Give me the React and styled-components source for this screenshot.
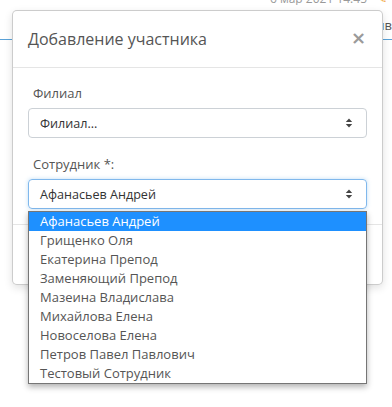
import React from "react";
import styled, { createGlobalStyle } from "styled-components";

const GlobalStyle = createGlobalStyle`
  html, body {
    margin: 0;
    padding: 0;
    background: #fff;
    font-family: "Open Sans", "Noto Sans", sans-serif;
    color: #555;
  }
  * { box-sizing: border-box; }
`;

const employees = [
  "Афанасьев Андрей",
  "Грищенко Оля",
  "Екатерина Препод",
  "Заменяющий Препод",
  "Мазеина Владислава",
  "Михайлова Елена",
  "Новоселова Елена",
  "Петров Павел Павлович",
  "Тестовый Сотрудник",
];

const Page = styled.div`
  position: relative;
  width: 392px;
  height: 407px;
  overflow: hidden;
`;

const TopStrip = styled.div`
  height: 5px;
  overflow: hidden;
  display: flex;
  justify-content: flex-end;
  align-items: flex-end;
  gap: 10px;
  padding-right: 5px;
  font-size: 12px;
  line-height: 12px;
  color: #999;
`;

const Accent = styled.span`
  color: #f0a030;
`;

const NavRow = styled.div`
  height: 35px;
  border-bottom: 1px solid #5aa2d8;
  display: flex;
  justify-content: flex-end;
  align-items: center;
  padding-top: 6px;
  font-size: 13px;
  color: #555;
`;

const Modal = styled.div`
  position: absolute;
  left: 12px;
  top: 10px;
  width: 371px;
  background: #fff;
  border: 1px solid rgba(0, 0, 0, 0.2);
  border-radius: 5px;
  box-shadow: 0 3px 9px rgba(0, 0, 0, 0.12);
`;

const Header = styled.div`
  display: flex;
  align-items: center;
  justify-content: space-between;
  padding: 15px;
  border-bottom: 1px solid #e5e5e5;
`;

const Title = styled.h4`
  margin: 0;
  font-size: 16px;
  line-height: 26px;
  font-weight: 400;
  color: #555;
`;

const Close = styled.span`
  font-family: "DejaVu Sans", sans-serif;
  font-size: 18px;
  font-weight: 700;
  line-height: 1;
  color: #9a9a9a;
  margin-top: -2px;
  margin-right: 1px;
`;

const Body = styled.div`
  padding: 15px;
  display: flex;
  flex-direction: column;
  gap: 16px;
`;

const Group = styled.div`
  position: relative;
  display: flex;
  flex-direction: column;
  gap: 5px;
`;

const Label = styled.label`
  padding-left: 5px;
  font-size: 13px;
  line-height: 20px;
  color: #555;
`;

const Select = styled.div`
  height: 30px;
  display: flex;
  align-items: center;
  justify-content: space-between;
  padding: 0 13px 0 11px;
  font-size: 12.6px;
  color: #333;
  border: 1px solid ${(p) => (p.$focused ? "#80b8ec" : "#ccd1d6")};
  border-radius: 4px;
  box-shadow: ${(p) =>
    p.$focused ? "0 0 4px rgba(102, 175, 233, 0.4)" : "none"};
`;

const Arrows = () => (
  <svg width="8" height="10" viewBox="0 0 8 10">
    <path d="M4 0.5 L7.2 4 H0.8 Z" fill="#444" />
    <path d="M4 9.5 L7.2 6 H0.8 Z" fill="#444" />
  </svg>
);

const Dropdown = styled.ul`
  position: absolute;
  top: calc(100% + 2px);
  left: 0;
  right: 0;
  margin: 0;
  padding: 0;
  list-style: none;
  background: #fff;
  border: 1px solid #767676;
  box-shadow: 0 3px 6px rgba(0, 0, 0, 0.3);
  z-index: 2;
`;

const Option = styled.li`
  height: 19px;
  line-height: 19px;
  padding-left: 11px;
  font-size: 13px;
  color: ${(p) => (p.$active ? "#fff" : "#555")};
  background: ${(p) => (p.$active ? "#1e90ff" : "transparent")};
`;

const Footer = styled.div`
  border-top: 1px solid #e5e5e5;
  padding: 15px;
  height: 60px;
  display: flex;
  justify-content: flex-end;
  gap: 5px;
`;

const Button = styled.button`
  height: 30px;
  padding: 0 12px;
  font-family: inherit;
  font-size: 13px;
  border-radius: 4px;
  border: 1px solid #ccc;
  background: ${(p) => (p.$primary ? "#337ab7" : "#fff")};
  color: ${(p) => (p.$primary ? "#fff" : "#333")};
`;

export default function App() {
  return (
    <Page>
      <GlobalStyle />
      <TopStrip>
        <span>6 мар 2021 14:45</span>
        <Accent>✎</Accent>
      </TopStrip>
      <NavRow>Архив</NavRow>

      <Modal>
        <Header>
          <Title>Добавление участника</Title>
          <Close>×</Close>
        </Header>
        <Body>
          <Group>
            <Label>Филиал</Label>
            <Select>
              <span>Филиал...</span>
              <Arrows />
            </Select>
          </Group>
          <Group>
            <Label>Сотрудник *:</Label>
            <Select $focused>
              <span>Афанасьев Андрей</span>
              <Arrows />
            </Select>
            <Dropdown>
              {employees.map((name, i) => (
                <Option key={name} $active={i === 0}>
                  {name}
                </Option>
              ))}
            </Dropdown>
          </Group>
        </Body>
        <Footer>
          <Button>Отмена</Button>
          <Button $primary>Добавить</Button>
        </Footer>
      </Modal>
    </Page>
  );
}
